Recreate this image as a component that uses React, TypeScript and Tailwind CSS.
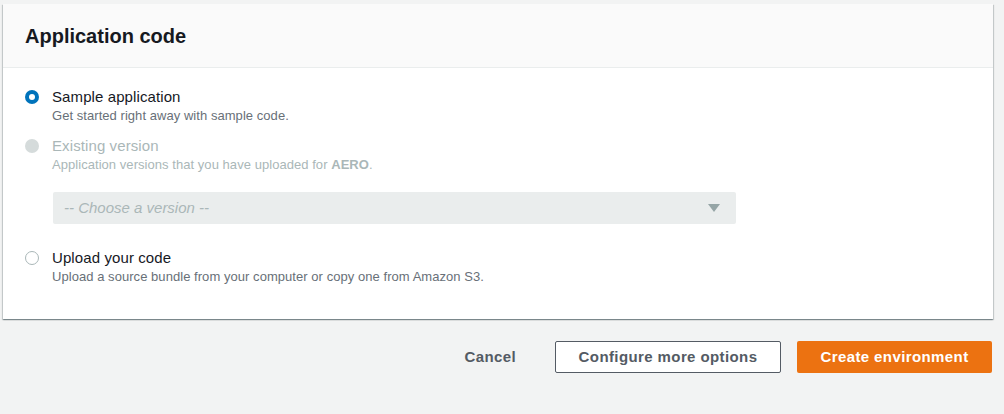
import type { ReactNode } from 'react';

function Radio({ state }: { state: 'checked' | 'disabled' | 'empty' }) {
	if (state === 'checked') {
		return (
			<span className="mt-[3px] flex size-[14px] shrink-0 items-center justify-center rounded-full bg-[#0073bb]">
				<span className="size-[6px] rounded-full bg-white" />
			</span>
		);
	}
	if (state === 'disabled') {
		return <span className="mt-[3px] size-[14px] shrink-0 rounded-full bg-[#d5dbdb]" />;
	}
	return <span className="mt-[3px] size-[14px] shrink-0 rounded-full border border-[#aab7b8] bg-white" />;
}

function Option({
	state,
	label,
	children,
}: {
	state: 'checked' | 'disabled' | 'empty';
	label: string;
	children: ReactNode;
}) {
	const disabled = state === 'disabled';
	return (
		<div className="flex gap-[13px]">
			<Radio state={state} />
			<div>
				<p className={`text-[15px] leading-[20px] tracking-[0.1px] ${disabled ? 'text-[#aab7b8]' : 'text-[#16191f]'}`}>
					{label}
				</p>
				<p className={`mt-px text-[13px] leading-[16px] tracking-[0.05px] ${disabled ? 'text-[#aab7b8]' : 'text-[#687078]'}`}>
					{children}
				</p>
			</div>
		</div>
	);
}

export default function App() {
	return (
		<div className="min-h-[414px] bg-[#f2f3f3] pt-1 pr-[11px] pl-[3px] font-['Liberation_Sans',Arial,sans-serif]">
			{/* Panel */}
			<section className="bg-white shadow-[0_1px_1px_0_rgba(0,28,36,0.3),1px_1px_1px_0_rgba(0,28,36,0.15),-1px_1px_1px_0_rgba(0,28,36,0.15)]">
				<header className="flex h-16 items-center border-b border-[#eaeded] bg-[#fafafa] px-[22px]">
					<h2 className="text-[20px] leading-[24px] font-bold text-[#16191f]">Application code</h2>
				</header>
				<div className="px-[22px] pt-[19px] pb-[34px]">
					<Option state="checked" label="Sample application">
						Get started right away with sample code.
					</Option>
					<div className="mt-3">
						<Option state="disabled" label="Existing version">
							Application versions that you have uploaded for <span className="font-bold">AERO</span>.
						</Option>
					</div>
					<div className="mt-[19px] ml-[28px] flex h-8 w-[683px] items-center justify-between rounded-[2px] bg-[#eaeded] pr-4 pl-[11px]">
						<span className="text-[15px] text-[#aab7b8] italic">-- Choose a version --</span>
						<svg width="12" height="8" viewBox="0 0 12 8" className="fill-[#95a5a6]">
							<path d="M0 0h12L6 8z" />
						</svg>
					</div>
					<div className="mt-6">
						<Option state="empty" label="Upload your code">
							Upload a source bundle from your computer or copy one from Amazon S3.
						</Option>
					</div>
				</div>
			</section>

			{/* Actions */}
			<div className="mt-[22px] flex items-center justify-end gap-4 pr-px">
				<button type="button" className="h-8 pr-[23px] pl-5 text-[15px] font-bold tracking-[0.4px] text-[#545b64]">
					Cancel
				</button>
				<button
					type="button"
					className="h-8 w-[226px] rounded-[2px] border border-[#545b64] bg-white text-[15px] font-bold tracking-[0.4px] text-[#545b64]"
				>
					Configure more options
				</button>
				<button
					type="button"
					className="h-8 w-[195px] rounded-[2px] bg-[#ec7211] text-[15px] font-bold tracking-[0.4px] text-white"
				>
					Create environment
				</button>
			</div>
		</div>
	);
}
